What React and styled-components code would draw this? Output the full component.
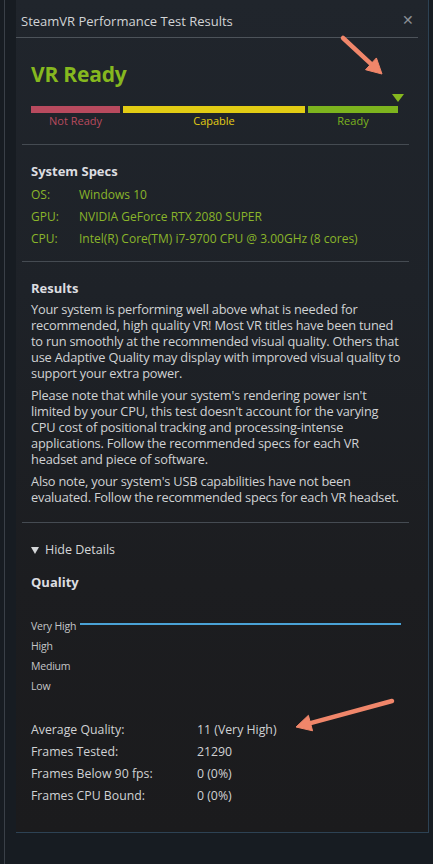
import React from "react";
import styled, { createGlobalStyle } from "styled-components";

const GlobalStyle = createGlobalStyle`
  html, body {
    margin: 0;
    padding: 0;
    background: #171c22;
  }
  body {
    font-family: "Open Sans", "Noto Sans", sans-serif;
    -webkit-font-smoothing: antialiased;
  }
`;

const Page = styled.div`
  display: flex;
  width: 433px;
  height: 864px;
  overflow: hidden;
  background: #171c22;
  padding-left: 16px;
  box-sizing: border-box;
  position: relative;
`;

const BackEdge = styled.div`
  position: absolute;
  left: 4px;
  top: 0;
  bottom: 0;
  width: 1px;
  background: #3a4048;
`;

const Window = styled.div`
  position: relative;
  width: 413px;
  height: 833px;
  box-sizing: border-box;
  background: linear-gradient(180deg, #20252c 0%, #1e2228 35%, #1c1d20 70%, #1b1b1d 100%);
  border-right: 1px solid #2d4254;
  border-bottom: 1px solid #2d4254;
  display: flex;
  flex-direction: column;
`;

const Header = styled.div`
  height: 38px;
  margin-right: 10px;
  padding: 5px 4px 0 5px;
  box-sizing: border-box;
  display: flex;
  align-items: center;
  justify-content: space-between;
  border-bottom: 1px solid #4d535a;
  color: #d2d4d6;
  font-size: 13px;
`;

const Close = styled.span`
  color: #8a8f95;
  font-size: 14px;
  margin-top: -4px;
`;

const Content = styled.div`
  margin: 0 19px 0 6px;
  display: flex;
  flex-direction: column;
`;

const Section = styled.div`
  padding: 0 6px 0 9px;
  height: ${(p) => p.$h}px;
  box-sizing: border-box;
  border-bottom: ${(p) => (p.$line ? "1px solid #454b52" : "none")};
  display: flex;
  flex-direction: column;
`;

const Status = styled.div`
  color: #86b81f;
  font-size: 21px;
  font-weight: 700;
  line-height: 28px;
  margin-top: 22px;
  letter-spacing: -0.2px;
`;

const Marker = styled.div`
  align-self: flex-end;
  margin-right: -1px;
  margin-top: 6px;
  width: 0;
  height: 0;
  border-left: 6px solid transparent;
  border-right: 6px solid transparent;
  border-top: 8px solid #86b81f;
`;

const Bar = styled.div`
  display: grid;
  grid-template-columns: 89px 182px 90px;
  column-gap: 3px;
  margin-top: 4px;
`;

const Segment = styled.div`
  height: 7px;
  background: ${(p) => p.$color};
`;

const SegLabel = styled.div`
  color: ${(p) => p.$color};
  font-size: 11px;
  line-height: 14px;
  text-align: center;
  margin-top: 1px;
`;

const Heading = styled.div`
  color: #dcdde0;
  font-size: 13px;
  font-weight: 700;
  line-height: 18px;
  margin-top: ${(p) => p.$top || 17}px;
  margin-bottom: ${(p) => p.$bottom || 4}px;
`;

const SpecRow = styled.div`
  display: grid;
  grid-template-columns: 48px 1fr;
  color: #8ab52a;
  font-size: 12px;
  line-height: 22px;
`;

const Para = styled.p`
  margin: 0 0 6px;
  color: #d0d2d4;
  font-size: 12.8px;
  line-height: 16px;
  letter-spacing: -0.2px;
  white-space: nowrap;
`;

const Toggle = styled.div`
  display: flex;
  align-items: center;
  gap: 6px;
  color: #d4d6d8;
  font-size: 12.5px;
  margin-top: 18px;
  line-height: 18px;
`;

const Caret = styled.span`
  width: 0;
  height: 0;
  border-left: 4.5px solid transparent;
  border-right: 4.5px solid transparent;
  border-top: 7px solid #d4d6d8;
`;

const Chart = styled.div`
  display: grid;
  grid-template-columns: 49px 321px;
  grid-auto-rows: 20px;
  margin-top: 21px;
`;

const Level = styled.div`
  color: #c4c6c8;
  font-size: 10.5px;
  line-height: 20px;
  letter-spacing: -0.2px;
  white-space: nowrap;
`;

const Trace = styled.div`
  align-self: center;
  height: 2px;
  margin-top: -4px;
  background: ${(p) => (p.$on ? "#4aa2d6" : "transparent")};
`;

const Stats = styled.div`
  display: grid;
  grid-template-columns: 166px 1fr;
  grid-auto-rows: 22px;
  margin-top: 23px;
  color: #d0d2d4;
  font-size: 12.3px;
  line-height: 22px;
`;

const Annotations = styled.svg`
  position: absolute;
  left: 0;
  top: 0;
  pointer-events: none;
`;

function Arrow({ x1, y1, x2, y2 }) {
  const dx = x2 - x1;
  const dy = y2 - y1;
  const len = Math.hypot(dx, dy);
  const ux = dx / len;
  const uy = dy / len;
  const bx = x2 - ux * 15;
  const by = y2 - uy * 15;
  const px = -uy * 8;
  const py = ux * 8;
  return (
    <g fill="#f0866a" stroke="#f0866a">
      <line x1={x1} y1={y1} x2={bx} y2={by} strokeWidth="4.5" strokeLinecap="round" />
      <polygon points={`${x2},${y2} ${bx + px},${by + py} ${bx - px},${by - py}`} strokeWidth="1" />
    </g>
  );
}

function Lines({ lines }) {
  return lines.map((l, i) => (
    <React.Fragment key={i}>
      {i > 0 && <br />}
      {l}
    </React.Fragment>
  ));
}

const specs = [
  ["OS:", "Windows 10"],
  ["GPU:", "NVIDIA GeForce RTX 2080 SUPER"],
  ["CPU:", "Intel(R) Core(TM) i7-9700 CPU @ 3.00GHz (8 cores)"],
];

const results = [
  [
    "Your system is performing well above what is needed for",
    "recommended, high quality VR! Most VR titles have been tuned",
    "to run smoothly at the recommended visual quality. Others that",
    "use Adaptive Quality may display with improved visual quality to",
    "support your extra power.",
  ],
  [
    "Please note that while your system's rendering power isn't",
    "limited by your CPU, this test doesn't account for the varying",
    "CPU cost of positional tracking and processing-intense",
    "applications. Follow the recommended specs for each VR",
    "headset and piece of software.",
  ],
  [
    "Also note, your system's USB capabilities have not been",
    "evaluated. Follow the recommended specs for each VR headset.",
  ],
];

const levels = ["Very High", "High", "Medium", "Low"];

const stats = [
  ["Average Quality:", "11 (Very High)"],
  ["Frames Tested:", "21290"],
  ["Frames Below 90 fps:", "0 (0%)"],
  ["Frames CPU Bound:", "0 (0%)"],
];

export default function App() {
  return (
    <>
      <GlobalStyle />
      <Page>
        <BackEdge />
        <Window>
          <Header>
            <span>SteamVR Performance Test Results</span>
            <Close>✕</Close>
          </Header>
          <Content>
            <Section $h={107} $line>
              <Status>VR Ready</Status>
              <Marker />
              <Bar>
                <Segment $color="#b84a5e" />
                <Segment $color="#e2cc14" />
                <Segment $color="#7db41e" />
                <SegLabel $color="#b84a5e">Not Ready</SegLabel>
                <SegLabel $color="#e2cc14">Capable</SegLabel>
                <SegLabel $color="#7db41e">Ready</SegLabel>
              </Bar>
            </Section>
            <Section $h={117} $line>
              <Heading>System Specs</Heading>
              {specs.map(([k, v]) => (
                <SpecRow key={k}>
                  <span>{k}</span>
                  <span>{v}</span>
                </SpecRow>
              ))}
            </Section>
            <Section $h={261} $line>
              <Heading $bottom={4}>Results</Heading>
              {results.map((p, i) => (
                <Para key={i}>
                  <Lines lines={p} />
                </Para>
              ))}
            </Section>
            <Section>
              <Toggle>
                <Caret />
                Hide Details
              </Toggle>
              <Heading $top={14}>Quality</Heading>
              <Chart>
                {levels.map((l, i) => (
                  <React.Fragment key={l}>
                    <Level>{l}</Level>
                    <Trace $on={i === 0} />
                  </React.Fragment>
                ))}
              </Chart>
              <Stats>
                {stats.map(([k, v]) => (
                  <React.Fragment key={k}>
                    <span>{k}</span>
                    <span>{v}</span>
                  </React.Fragment>
                ))}
              </Stats>
            </Section>
          </Content>
          <Annotations width="413" height="833">
            <Arrow x1={327} y1={38} x2={366} y2={74} />
            <Arrow x1={376} y1={701} x2={280} y2={727} />
          </Annotations>
        </Window>
      </Page>
    </>
  );
}
